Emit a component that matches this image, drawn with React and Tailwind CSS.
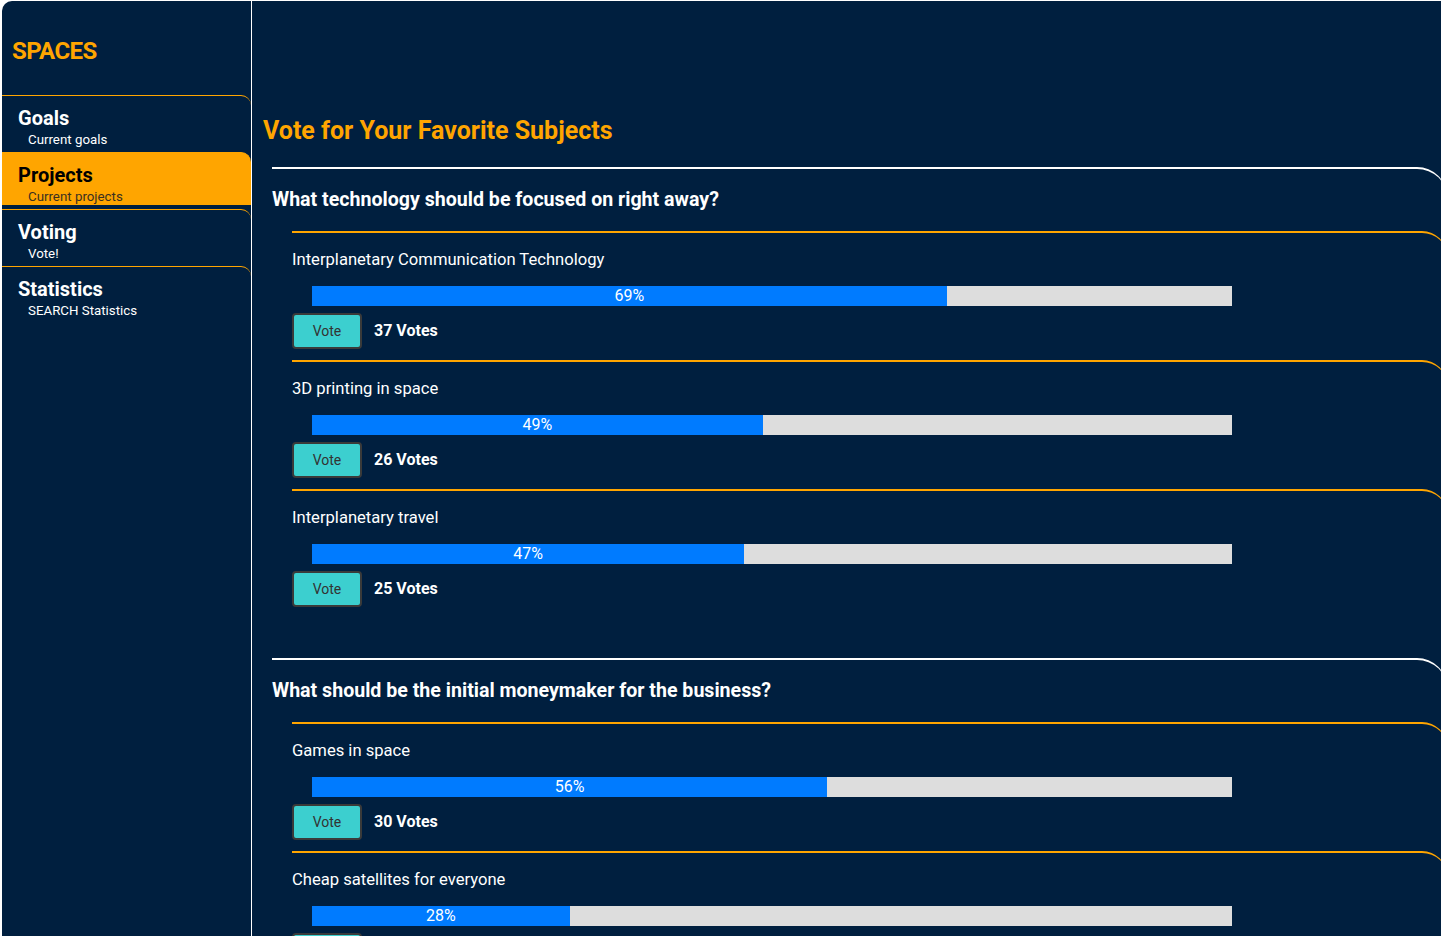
import React from "react";

const F = { fontFamily: "Roboto, 'Noto Sans', sans-serif" };

const nav = [
  { t: "Goals", s: "Current goals" },
  { t: "Projects", s: "Current projects", active: true },
  { t: "Voting", s: "Vote!" },
  { t: "Statistics", s: "SEARCH Statistics" },
];

const questions = [
  {
    q: "What technology should be focused on right away?",
    opts: [
      { l: "Interplanetary Communication Technology", p: 69, v: 37 },
      { l: "3D printing in space", p: 49, v: 26 },
      { l: "Interplanetary travel", p: 47, v: 25 },
    ],
  },
  {
    q: "What should be the initial moneymaker for the business?",
    opts: [
      { l: "Games in space", p: 56, v: 30 },
      { l: "Cheap satellites for everyone", p: 28, v: 15 },
      { l: "Space tourism", p: 16, v: 9 },
    ],
  },
];

function Option({ o }) {
  return (
    <div className="ml-[20px] border-t-2 border-[#ffa500] rounded-tr-[25px] pt-[14px] pb-[11px]">
      <div className="text-[16.6px] leading-[26px] text-white">{o.l}</div>
      <div className="ml-[20px] mt-[13px] w-[920px] h-[20px] bg-[#dddddd] flex">
        <div
          className="h-full bg-[#007bff] flex items-center justify-center text-white text-[16px] leading-[20px]"
          style={{ width: `${o.p}%` }}
        >
          {o.p}%
        </div>
      </div>
      <div className="mt-[7px] flex items-center gap-[12px]">
        <button className="w-[70px] h-[36px] bg-[#3ccfcf] border-2 border-[#3a3a3a] rounded-[4px] text-[14px] text-[#333]">
          Vote
        </button>
        <span className="text-white font-bold text-[16px]">{o.v} Votes</span>
      </div>
    </div>
  );
}

export default function App() {
  return (
    <div className="h-[936px] overflow-hidden bg-white flex gap-px pt-px pl-[2px]" style={F}>
      <aside className="w-[249px] shrink-0 bg-[#001f3f] rounded-tl-[10px]">
        <div className="h-[94px] flex items-center pl-[10px] pt-[5px]">
          <span className="text-[#ffa500] font-bold text-[24px] tracking-tight">SPACES</span>
        </div>
        {nav.map((n) => (
          <div
            key={n.t}
            className={
              n.active
                ? "h-[53px] mb-[4px] border-t border-[#ffa500] rounded-tr-[10px] bg-[#ffa500] pl-[16px] pt-[8px]"
                : "h-[53px] mb-[4px] border-t border-[#ffa500] rounded-tr-[10px] pl-[16px] pt-[8px]"
            }
          >
            <div
              className={
                n.active
                  ? "text-[20px] leading-[28px] font-bold text-black"
                  : "text-[20px] leading-[28px] font-bold text-white"
              }
            >
              {n.t}
            </div>
            <div
              className={
                n.active
                  ? "pl-[10px] text-[13.3px] leading-[16px] text-[#3a3020]"
                  : "pl-[10px] text-[13.3px] leading-[16px] text-white"
              }
            >
              {n.s}
            </div>
          </div>
        ))}
      </aside>
      <main className="flex-1 bg-[#001f3f] pl-[11px] pt-[114px] mr-[-6px]">
        <h1 className="text-[25px] leading-[32px] font-bold text-[#ffa500]">
          Vote for Your Favorite Subjects
        </h1>
        {questions.map((q, i) => (
          <section
            key={i}
            className={
              i === 0
                ? "ml-[9px] mt-[20px] border-t-2 border-white rounded-tr-[30px]"
                : "ml-[9px] mt-[40px] border-t-2 border-white rounded-tr-[30px]"
            }
          >
            <h2 className="pt-[17px] pb-[17px] text-[19.6px] leading-[28px] font-bold text-white">{q.q}</h2>
            {q.opts.map((o) => (
              <Option key={o.l} o={o} />
            ))}
          </section>
        ))}
      </main>
    </div>
  );
}
